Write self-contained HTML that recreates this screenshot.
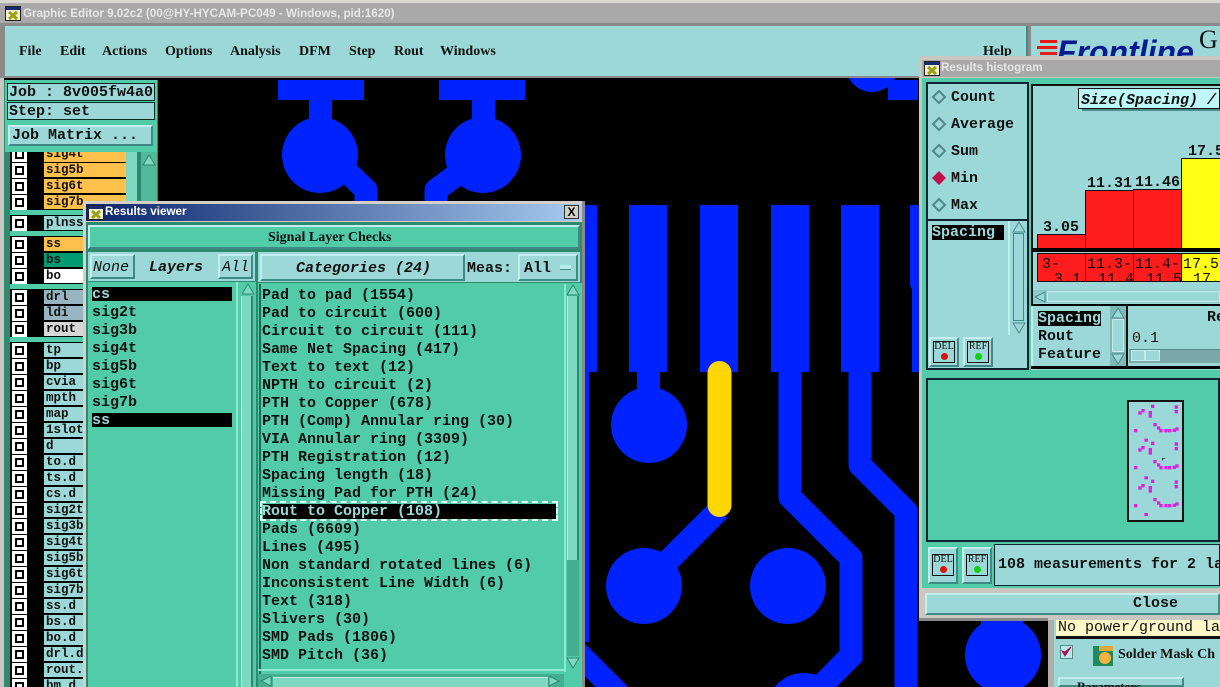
<!DOCTYPE html>
<html><head><meta charset="utf-8"><style>
html,body{margin:0;padding:0;background:#000;width:1220px;height:687px;overflow:hidden;}
#p{position:relative;width:1220px;height:687px;overflow:hidden;background:#000;}
#p div,#p svg{position:absolute;}
.t{white-space:pre;font:bold 15px/18px "Liberation Mono",monospace;color:#111;margin-top:1px;}
.s{white-space:pre;font:bold 14px/18px "Liberation Serif",serif;color:#111;}
.l{white-space:pre;font:bold 12.500px/15px "Liberation Mono",monospace;color:#111;}
.b{background:#9cd8d8;border:2px solid;border-color:#c4eeee #3f8a85 #3f8a85 #c4eeee;box-sizing:border-box;}
.g{background:#52cca8;}
.lt{background:#9cd8d8;}
.ck{left:12px;width:15px;height:15px;background:#fff;box-sizing:border-box;}
.ck i{position:absolute;left:3px;top:3px;width:9px;height:9px;border:2px solid #000;box-sizing:border-box;background:#fff;display:block;}
.tb{white-space:pre;font:bold 11.650px/16px "Liberation Sans",sans-serif;}
</style></head><body><div id="p">

<!-- PCB -->
<svg style="left:0;top:0" width="1220" height="687" viewBox="0 0 1220 687">
<g fill="#0022ff" stroke="none">
<rect x="278" y="80" width="86" height="20"/><rect x="309" y="100" width="23" height="25"/><circle cx="320" cy="155" r="38"/>
<rect x="439" y="80" width="86" height="20"/><rect x="472" y="100" width="23" height="25"/><circle cx="483" cy="155" r="38"/>
<circle cx="872" cy="66" r="26"/><rect x="888" y="80" width="30" height="20"/>
<rect x="585" y="205" width="12" height="167"/><rect x="583" y="372" width="6" height="270"/>
<rect x="629" y="205" width="38" height="167"/><rect x="700" y="205" width="38" height="167"/><rect x="771" y="205" width="38" height="167"/><rect x="841" y="205" width="38" height="167"/>
<polygon points="910,205 920,205 920,372 912,372 912,290 910,285"/>
<rect x="637" y="372" width="23" height="20"/>
<circle cx="649" cy="425" r="38"/><circle cx="644" cy="586" r="38"/><circle cx="788" cy="586" r="38"/>
<path d="M774.500 687A38 38 0 0 1 833.500 687Z"/>
<path d="M982.500 687A38 38 0 1 1 1023.500 687Z"/>
<rect x="981" y="615" width="42" height="10"/>
<polygon points="839.500,651 862.500,656 862.500,661 836.500,687 804,687"/>
<polygon points="575,633.700 628.300,687 595.700,687 575,666.300"/>
</g>
<g fill="none" stroke="#0022ff" stroke-width="23" stroke-linejoin="round">
<path d="M719 510L644 585"/>
<path d="M790 372V497L851 558V656"/>
<path d="M860 372V465L906 511V687"/>
<path d="M340 165L366 190V215"/>
<path d="M470 165L436 190V215"/>
</g>
<rect x="707.500" y="361" width="24" height="156" rx="12" fill="#ffd700"/>
</svg>

<!-- title bar -->
<div style="left:0;top:0;width:1220px;height:3px;background:#d8d8d0"></div>
<div style="left:0;top:3px;width:1220px;height:20px;background:#a9a9a9"></div>
<svg style="left:5px;top:6px" width="16" height="15"><rect x="0.500" y="0.500" width="15" height="14" fill="#f2eed8" stroke="#222"/><rect x="1" y="1" width="14" height="3" fill="#1a2a70"/><path d="M4 6L12 13M12 6L4 13" stroke="#9aa010" stroke-width="3"/></svg>
<div class="tb" style="left:23px;top:6px;color:#e6e6e6">Graphic Editor 9.02c2 (00@HY-HYCAM-PC049 - Windows, pid:1620)</div>

<!-- menu -->
<div style="left:0;top:23px;width:1220px;height:55px;background:#8a8a8a"></div>
<div style="left:5px;top:26px;width:1021px;height:50px;background:#9cd8d8;border-right:2px solid #3f8a85"></div>
<div class="s" style="left:19px;top:43px">File</div>
<div class="s" style="left:60px;top:43px">Edit</div>
<div class="s" style="left:102px;top:43px">Actions</div>
<div class="s" style="left:165px;top:43px">Options</div>
<div class="s" style="left:230px;top:43px">Analysis</div>
<div class="s" style="left:299px;top:43px">DFM</div>
<div class="s" style="left:349px;top:43px">Step</div>
<div class="s" style="left:394px;top:43px">Rout</div>
<div class="s" style="left:440px;top:43px">Windows</div>
<div class="s" style="left:983px;top:43px">Help</div>
<div style="left:1031px;top:26px;width:189px;height:50px;background:#9cd8d8"></div>
<div style="left:1040px;top:40px;width:17px;height:3px;background:#e81818"></div>
<div style="left:1037px;top:46px;width:20px;height:3px;background:#e81818"></div>
<div style="left:1040px;top:52px;width:17px;height:3px;background:#e81818"></div>
<div style="left:1057px;top:34px;white-space:pre;font:italic bold 32px/36px 'Liberation Sans',sans-serif;color:#0a1a90">Frontline</div>
<div style="left:1199px;top:25px;font:26px/30px 'Liberation Serif',serif;color:#111">G</div>

<!-- left panel -->
<div style="left:4px;top:80px;width:154px;height:607px;background:#2e8a6e"></div>
<div style="left:10px;top:152px;width:126px;height:535px;background:#52cca8"></div>
<div style="left:5px;top:80px;width:152px;height:72px;background:#52cca8"></div>
<div class="lt" style="left:7px;top:83px;width:148px;height:18px;border:1px solid #0a2a22;box-sizing:border-box"></div>
<div class="lt" style="left:7px;top:102px;width:148px;height:18px;border:1px solid #0a2a22;box-sizing:border-box"></div>
<div class="t" style="left:9px;top:83px">Job : 8v005fw4a0</div>
<div class="t" style="left:9px;top:102px">Step: set</div>
<div class="b" style="left:8px;top:125px;width:145px;height:21px"></div>
<div class="t" style="left:12px;top:126px">Job Matrix ...</div>

<!-- layer rows -->
<div style="left:10px;top:152px;width:34px;height:535px;background:#000"></div>
<div style="left:44px;top:152px;width:82px;height:535px;background:#000"></div>
<div style="left:10px;top:210px;width:116px;height:5px;background:#52cca8"></div>
<div style="left:10px;top:231px;width:116px;height:5px;background:#52cca8"></div>
<div style="left:10px;top:284px;width:116px;height:5px;background:#52cca8"></div>
<div style="left:10px;top:337px;width:116px;height:5px;background:#52cca8"></div>
<div style="left:126px;top:152px;width:11px;height:535px;background:#7fd8c0"></div>
<div style="left:141px;top:152px;width:16px;height:535px;background:#52b89a"></div>
<svg style="left:142px;top:154px" width="14" height="12"><path d="M7 1L13 11H1Z" fill="#7fd8c0" stroke="#2e8a6e"/></svg>

<div style="left:44px;top:152px;width:82px;height:10px;background:#ffc04c"></div>
<div style="left:44px;top:163px;width:82px;height:14px;background:#ffc04c"></div>
<div style="left:44px;top:179px;width:82px;height:14px;background:#ffc04c"></div>
<div style="left:44px;top:195px;width:82px;height:14px;background:#ffc04c"></div>
<div style="left:44px;top:216px;width:82px;height:14px;background:#9cd8d8"></div>
<div style="left:44px;top:237px;width:82px;height:14px;background:#ffc04c"></div>
<div style="left:44px;top:253px;width:82px;height:14px;background:#009a70"></div>
<div style="left:44px;top:269px;width:82px;height:14px;background:#fff"></div>
<div style="left:44px;top:290px;width:82px;height:14px;background:#98b4c0"></div>
<div style="left:44px;top:306px;width:82px;height:14px;background:#98b4c0"></div>
<div style="left:44px;top:322px;width:82px;height:14px;background:#d8d8d8"></div>
<div style="left:44px;top:343px;width:82px;height:344px;background:repeating-linear-gradient(#9cd8d8 0,#9cd8d8 14px,#000 14px,#000 16px)"></div>

<div class="l" style="left:46px;top:147px;clip-path:inset(5px 0 0 0)">sig4t</div>
<div class="l" style="left:46px;top:163px">sig5b</div>
<div class="l" style="left:46px;top:179px">sig6t</div>
<div class="l" style="left:46px;top:195px">sig7b</div>
<div class="l" style="left:46px;top:216px">plnss</div>
<div class="l" style="left:46px;top:237px">ss</div>
<div class="l" style="left:46px;top:253px">bs</div>
<div class="l" style="left:46px;top:269px">bo</div>
<div class="l" style="left:46px;top:290px">drl</div>
<div class="l" style="left:46px;top:306px">ldi</div>
<div class="l" style="left:46px;top:322px">rout</div>
<div class="l" style="left:46px;top:343px">tp</div>
<div class="l" style="left:46px;top:359px">bp</div>
<div class="l" style="left:46px;top:375px">cvia</div>
<div class="l" style="left:46px;top:391px">mpth</div>
<div class="l" style="left:46px;top:407px">map</div>
<div class="l" style="left:46px;top:423px">1slot</div>
<div class="l" style="left:46px;top:439px">d</div>
<div class="l" style="left:46px;top:455px">to.d</div>
<div class="l" style="left:46px;top:471px">ts.d</div>
<div class="l" style="left:46px;top:487px">cs.d</div>
<div class="l" style="left:46px;top:503px">sig2t</div>
<div class="l" style="left:46px;top:519px">sig3b</div>
<div class="l" style="left:46px;top:535px">sig4t</div>
<div class="l" style="left:46px;top:551px">sig5b</div>
<div class="l" style="left:46px;top:567px">sig6t</div>
<div class="l" style="left:46px;top:583px">sig7b</div>
<div class="l" style="left:46px;top:599px">ss.d</div>
<div class="l" style="left:46px;top:615px">bs.d</div>
<div class="l" style="left:46px;top:631px">bo.d</div>
<div class="l" style="left:46px;top:647px">drl.d</div>
<div class="l" style="left:46px;top:663px">rout.d</div>
<div class="l" style="left:46px;top:679px;height:8px;line-height:14px;overflow:hidden">bm.d</div>

<!-- checkboxes -->
<div class="ck" style="top:147px;clip-path:inset(5px 0 0 0)"><i></i></div>
<div class="ck" style="top:163px"><i></i></div>
<div class="ck" style="top:179px"><i></i></div>
<div class="ck" style="top:195px"><i></i></div>
<div class="ck" style="top:216px"><i></i></div>
<div class="ck" style="top:237px"><i></i></div>
<div class="ck" style="top:253px"><i></i></div>
<div class="ck" style="top:269px"><i></i></div>
<div class="ck" style="top:290px"><i></i></div>
<div class="ck" style="top:306px"><i></i></div>
<div class="ck" style="top:322px"><i></i></div>
<div class="ck" style="top:343px"><i></i></div>
<div class="ck" style="top:359px"><i></i></div>
<div class="ck" style="top:375px"><i></i></div>
<div class="ck" style="top:391px"><i></i></div>
<div class="ck" style="top:407px"><i></i></div>
<div class="ck" style="top:423px"><i></i></div>
<div class="ck" style="top:439px"><i></i></div>
<div class="ck" style="top:455px"><i></i></div>
<div class="ck" style="top:471px"><i></i></div>
<div class="ck" style="top:487px"><i></i></div>
<div class="ck" style="top:503px"><i></i></div>
<div class="ck" style="top:519px"><i></i></div>
<div class="ck" style="top:535px"><i></i></div>
<div class="ck" style="top:551px"><i></i></div>
<div class="ck" style="top:567px"><i></i></div>
<div class="ck" style="top:583px"><i></i></div>
<div class="ck" style="top:599px"><i></i></div>
<div class="ck" style="top:615px"><i></i></div>
<div class="ck" style="top:631px"><i></i></div>
<div class="ck" style="top:647px"><i></i></div>
<div class="ck" style="top:663px"><i></i></div>
<div class="ck" style="top:679px;height:8px;overflow:hidden"><i style="height:5px;border-bottom:0"></i></div>
<div style="left:0;top:78px;width:4px;height:609px;background:#c8c8c0"></div>

<!-- Results viewer -->
<div style="left:83px;top:201px;width:502px;height:486px;background:#d4d0c8"></div>
<div style="left:86px;top:204px;width:496px;height:17px;background:linear-gradient(90deg,#0a246a,#a6caf0)"></div>
<svg style="left:88px;top:205px" width="16" height="15"><rect x="0.500" y="0.500" width="15" height="14" fill="#f2eed8" stroke="#222"/><rect x="1" y="1" width="14" height="3" fill="#1a2a70"/><path d="M4 6L12 13M12 6L4 13" stroke="#9aa010" stroke-width="3"/></svg>
<div class="tb" style="left:105px;top:204px;color:#fff">Results viewer</div>
<div style="left:564px;top:205px;width:15px;height:14px;background:#d4d0c8;border:1px solid #333;box-sizing:border-box;font:bold 12px/12px 'Liberation Sans';text-align:center;color:#000">X</div>
<div style="left:86px;top:222px;width:496px;height:465px;background:#2e8a6e"></div>
<div class="b g" style="left:88px;top:225px;width:492px;height:24px"></div>
<div class="s" style="left:268px;top:229px">Signal Layer Checks</div>

<div class="lt" style="left:88px;top:252px;width:167px;height:29px"></div>
<div class="b" style="left:90px;top:254px;width:45px;height:25px"></div>
<div class="t" style="left:93px;top:258px;font-weight:normal;font-style:italic">None</div>
<div class="t" style="left:149px;top:258px;font-style:italic">Layers</div>
<div class="b" style="left:218px;top:254px;width:35px;height:25px"></div>
<div class="t" style="left:222px;top:258px;font-weight:normal;font-style:italic">All</div>
<div class="g" style="left:88px;top:282px;width:168px;height:405px"></div>
<div style="left:92px;top:287px;width:140px;height:14px;background:#000"></div>
<div class="t" style="left:92px;top:285px;color:#9cd8d8">cs</div>
<div class="t" style="left:92px;top:303px">sig2t</div>
<div class="t" style="left:92px;top:321px">sig3b</div>
<div class="t" style="left:92px;top:339px">sig4t</div>
<div class="t" style="left:92px;top:357px">sig5b</div>
<div class="t" style="left:92px;top:375px">sig6t</div>
<div class="t" style="left:92px;top:393px">sig7b</div>
<div style="left:92px;top:413px;width:140px;height:14px;background:#000"></div>
<div class="t" style="left:92px;top:411px;color:#9cd8d8">ss</div>
<div style="left:236px;top:282px;width:20px;height:405px;background:#52cca8;border-left:2px solid #8fe8d0;box-sizing:border-box"></div>
<div style="left:241px;top:296px;width:12px;height:391px;background:#7fd8c0;border-left:1px solid #b8f0e0;border-right:2px solid #2e8a6e;box-sizing:border-box"></div>
<svg style="left:242px;top:283px" width="13" height="12"><path d="M6 1L12 11H0Z" fill="#7fd8c0" stroke="#2e8a6e"/></svg>

<div class="lt" style="left:258px;top:252px;width:322px;height:30px"></div>
<div class="b" style="left:260px;top:254px;width:205px;height:27px"></div>
<div class="t" style="left:296px;top:259px;font-style:italic">Categories (24)</div>
<div class="t" style="left:467px;top:259px">Meas:</div>
<div class="b" style="left:518px;top:254px;width:60px;height:27px"></div>
<div class="t" style="left:524px;top:259px">All</div>
<div style="left:560px;top:265px;width:11px;height:4px;background:#b8ecec;border-bottom:1px solid #3f8a85"></div>

<div class="g" style="left:258px;top:283px;width:324px;height:404px"></div>
<div style="left:259px;top:284px;width:2px;height:403px;background:#1f6a55"></div>
<div class="t" style="left:262px;top:286px">Pad to pad (1554)</div>
<div class="t" style="left:262px;top:304px">Pad to circuit (600)</div>
<div class="t" style="left:262px;top:322px">Circuit to circuit (111)</div>
<div class="t" style="left:262px;top:340px">Same Net Spacing (417)</div>
<div class="t" style="left:262px;top:358px">Text to text (12)</div>
<div class="t" style="left:262px;top:376px">NPTH to circuit (2)</div>
<div class="t" style="left:262px;top:394px">PTH to Copper (678)</div>
<div class="t" style="left:262px;top:412px">PTH (Comp) Annular ring (30)</div>
<div class="t" style="left:262px;top:430px">VIA Annular ring (3309)</div>
<div class="t" style="left:262px;top:448px">PTH Registration (12)</div>
<div class="t" style="left:262px;top:466px">Spacing length (18)</div>
<div class="t" style="left:262px;top:484px">Missing Pad for PTH (24)</div>
<div style="left:260px;top:501px;width:298px;height:20px;box-sizing:border-box;border:2px dashed #e8f8f4"></div>
<div style="left:263px;top:504px;width:293px;height:15px;background:#000"></div>
<div class="t" style="left:262px;top:502px;color:#9cd8d8">Rout to Copper (108)</div>
<div class="t" style="left:262px;top:520px">Pads (6609)</div>
<div class="t" style="left:262px;top:538px">Lines (495)</div>
<div class="t" style="left:262px;top:556px">Non standard rotated lines (6)</div>
<div class="t" style="left:262px;top:574px">Inconsistent Line Width (6)</div>
<div class="t" style="left:262px;top:592px">Text (318)</div>
<div class="t" style="left:262px;top:610px">Slivers (30)</div>
<div class="t" style="left:262px;top:628px">SMD Pads (1806)</div>
<div class="t" style="left:262px;top:646px">SMD Pitch (36)</div>
<div style="left:564px;top:284px;width:2px;height:388px;background:#8fe8d0"></div>
<div style="left:567px;top:296px;width:12px;height:264px;background:#7fd8c0;border-left:1px solid #b8f0e0;border-right:2px solid #2e8a6e;box-sizing:border-box"></div>
<div style="left:567px;top:560px;width:12px;height:96px;background:#45b090"></div>
<svg style="left:567px;top:284px" width="13" height="12"><path d="M6 1L12 11H0Z" fill="#7fd8c0" stroke="#2e8a6e"/></svg>
<svg style="left:567px;top:657px" width="13" height="12"><path d="M6 11L12 1H0Z" fill="#7fd8c0" stroke="#2e8a6e"/></svg>
<div style="left:258px;top:669px;width:306px;height:2px;background:#8fe8d0"></div>
<div style="left:258px;top:674px;width:306px;height:13px;background:#45b090"></div>
<div style="left:273px;top:677px;width:275px;height:10px;background:#7fd8c0;border-top:1px solid #b8f0e0;box-sizing:border-box"></div>
<svg style="left:260px;top:676px" width="13" height="11"><path d="M1 5L11 0V10Z" fill="#7fd8c0" stroke="#2e8a6e"/></svg>
<svg style="left:548px;top:676px" width="13" height="11"><path d="M11 5L1 0V10Z" fill="#7fd8c0" stroke="#2e8a6e"/></svg>
<div style="left:582px;top:201px;width:3px;height:486px;background:#8a8a8a"></div>

<!-- far right panel -->
<div style="left:1048px;top:618px;width:172px;height:69px;background:#9cd8d8;border-left:6px solid #b0b0a8;box-sizing:border-box"></div>
<div style="left:1056px;top:620px;width:164px;height:16px;background:#fdf7c8"></div>
<div style="left:1056px;top:636px;width:164px;height:3px;background:#111"></div>
<div class="t" style="left:1058px;top:618px;font-weight:normal">No power/ground la</div>
<svg style="left:1060px;top:645px" width="14" height="15"><rect x="0.500" y="0.500" width="12" height="13" fill="#b8ecec" stroke="#5a8a88"/><path d="M2 6L5 11L11 2L5 7Z" fill="#b01050" stroke="#b01050"/></svg>
<svg style="left:1093px;top:646px" width="20" height="20"><rect width="20" height="20" fill="#1f8a5a"/><circle cx="12" cy="12" r="6" fill="#f8b040"/><path d="M6 0H20V5H6Z" fill="#e0a838"/></svg>
<div class="s" style="left:1118px;top:646px">Solder Mask Ch</div>
<div class="b" style="left:1058px;top:677px;width:126px;height:10px"></div>
<div class="s" style="left:1077px;top:678px;font-size:13px;height:9px;overflow:hidden">Parameters</div>

<!-- Results histogram -->
<div style="left:919px;top:56px;width:301px;height:564px;background:#c8c8c0"></div>
<div style="left:922px;top:60px;width:298px;height:17px;background:#a9a9a9"></div>
<svg style="left:924px;top:61px" width="16" height="15"><rect x="0.500" y="0.500" width="15" height="14" fill="#f2eed8" stroke="#222"/><rect x="1" y="1" width="14" height="3" fill="#1a2a70"/><path d="M4 6L12 13M12 6L4 13" stroke="#9aa010" stroke-width="3"/></svg>
<div class="tb" style="left:941px;top:60px;color:#e6e6e6">Results histogram</div>
<div style="left:922px;top:78px;width:298px;height:510px;background:#52cca8"></div>
<div class="lt" style="left:926px;top:82px;width:103px;height:288px;border:2px solid #123;box-sizing:border-box"></div>
<div style="left:926px;top:219px;width:103px;height:2px;background:#123"></div>

<svg style="left:930px;top:88px" width="20" height="130">
<g fill="#9cd8d8" stroke="#4f8a8a" stroke-width="2"><path d="M9 3L15 9L9 15L3 9Z"/><path d="M9 30L15 36L9 42L3 36Z"/><path d="M9 57L15 63L9 69L3 63Z"/><path d="M9 111L15 117L9 123L3 117Z"/></g>
<path d="M9 83L16 90L9 97L2 90Z" fill="#c0104c"/>
</svg>
<div class="t" style="left:951px;top:88px">Count</div>
<div class="t" style="left:951px;top:115px">Average</div>
<div class="t" style="left:951px;top:142px">Sum</div>
<div class="t" style="left:951px;top:169px">Min</div>
<div class="t" style="left:951px;top:196px">Max</div>

<div style="left:932px;top:225px;width:72px;height:15px;background:#000"></div>
<div class="t" style="left:932px;top:223px;color:#9cd8d8">Spacing</div>
<div style="left:1008px;top:221px;width:2px;height:114px;background:#c4eeee"></div>
<div style="left:1013px;top:233px;width:11px;height:88px;background:#9cd8d8;border:1px solid #3f8a85;box-sizing:border-box"></div>
<svg style="left:1012px;top:221px" width="14" height="12"><path d="M7 1L13 11H1Z" fill="#9cd8d8" stroke="#4f8a8a"/></svg>
<svg style="left:1012px;top:322px" width="14" height="12"><path d="M7 11L13 1H1Z" fill="#9cd8d8" stroke="#4f8a8a"/></svg>
<div class="b" style="left:929px;top:337px;width:30px;height:30px"></div>
<div class="b" style="left:963px;top:337px;width:30px;height:30px"></div>
<div style="left:933px;top:341px;width:22px;height:22px;border:1px solid #111;box-sizing:border-box;font:10px/10px 'Liberation Serif';text-align:center;color:#111">DEL</div>
<div style="left:967px;top:341px;width:22px;height:22px;border:1px solid #111;box-sizing:border-box;font:10px/10px 'Liberation Serif';text-align:center;color:#111">REF</div>
<div style="left:941px;top:353px;width:7px;height:7px;border-radius:50%;background:#e01010"></div>
<div style="left:975px;top:353px;width:7px;height:7px;border-radius:50%;background:#10d010"></div>

<!-- histogram chart -->
<div class="lt" style="left:1031px;top:84px;width:189px;height:222px;border-top:2px solid #111;border-left:2px solid #111;box-sizing:border-box"></div>
<div style="left:1082px;top:108px;width:138px;height:3px;background:#4f8a8a"></div>
<div style="left:1078px;top:88px;width:142px;height:21px;background:#bff8f8;border:1px solid #111;box-sizing:border-box"></div>
<div class="t" style="left:1081px;top:91px;font-style:italic">Size(Spacing) /</div>
<div style="left:1037px;top:234px;width:49px;height:15px;background:#ff1c1c;border:1px solid #111;box-sizing:border-box"></div>
<div style="left:1085px;top:190px;width:49px;height:59px;background:#ff1c1c;border:1px solid #111;box-sizing:border-box"></div>
<div style="left:1133px;top:189px;width:49px;height:60px;background:#ff1c1c;border:1px solid #111;box-sizing:border-box"></div>
<div style="left:1181px;top:158px;width:39px;height:91px;background:#ffff14;border:1px solid #111;box-sizing:border-box;border-right:0"></div>
<div class="t" style="left:1043px;top:218px;">3.05</div>
<div class="t" style="left:1087px;top:174px;">11.31</div>
<div class="t" style="left:1135px;top:173px;">11.46</div>
<div class="t" style="left:1188px;top:142px;">17.5</div>
<div style="left:1032px;top:248px;width:188px;height:4px;background:#000"></div>
<div style="left:1037px;top:253px;width:49px;height:29px;background:#ff1c1c;border:1px solid #111;box-sizing:border-box"></div>
<div style="left:1085px;top:253px;width:49px;height:29px;background:#ff1c1c;border:1px solid #111;box-sizing:border-box"></div>
<div style="left:1133px;top:253px;width:49px;height:29px;background:#ff1c1c;border:1px solid #111;box-sizing:border-box"></div>
<div style="left:1181px;top:253px;width:39px;height:29px;background:#ffff14;border:1px solid #111;box-sizing:border-box;border-right:0"></div>
<div style="left:1032px;top:253px;width:188px;height:29px;overflow:hidden">
<div class="t" style="left:10px;top:2px;font-weight:normal">3-</div>
<div class="t" style="left:22px;top:17px;font-weight:normal;height:11px;overflow:hidden">3.1</div>
<div class="t" style="left:55px;top:2px;font-weight:normal">11.3-</div>
<div class="t" style="left:66px;top:17px;font-weight:normal;height:11px;overflow:hidden">11.4</div>
<div class="t" style="left:103px;top:2px;font-weight:normal">11.4-</div>
<div class="t" style="left:114px;top:17px;font-weight:normal;height:11px;overflow:hidden">11.5</div>
<div class="t" style="left:151px;top:2px;font-weight:normal">17.5</div>
<div class="t" style="left:161px;top:17px;font-weight:normal;height:11px;overflow:hidden">17.</div>
</div>
<div style="left:1033px;top:290px;width:187px;height:13px;background:#8fc8c8"></div>
<div style="left:1047px;top:291px;width:173px;height:11px;background:#9cd8d8;border:1px solid #c4eeee;box-sizing:border-box"></div>
<svg style="left:1034px;top:291px" width="12" height="12"><path d="M1 6L11 1V11Z" fill="#9cd8d8" stroke="#4f8a8a"/></svg>
<div style="left:1031px;top:304px;width:189px;height:3px;background:#000"></div>
<div style="left:1031px;top:306px;width:189px;height:64px;background:#9cd8d8;border-left:2px solid #c4eeee;box-sizing:border-box"></div>
<div style="left:1031px;top:366px;width:189px;height:3px;background:#000"></div>
<div style="left:1038px;top:311px;width:63px;height:15px;background:#000"></div>
<div class="t" style="left:1038px;top:309px;color:#9cd8d8">Spacing</div>
<div class="t" style="left:1038px;top:327px">Rout</div>
<div class="t" style="left:1038px;top:345px">Feature</div>
<div style="left:1110px;top:306px;width:16px;height:60px;background:#7fb8b8"></div>
<div style="left:1112px;top:319px;width:12px;height:33px;background:#9cd8d8;border:1px solid #c4eeee;box-sizing:border-box"></div>
<svg style="left:1111px;top:307px" width="14" height="12"><path d="M7 1L13 11H1Z" fill="#9cd8d8" stroke="#4f8a8a"/></svg>
<svg style="left:1111px;top:353px" width="14" height="12"><path d="M7 11L13 1H1Z" fill="#9cd8d8" stroke="#4f8a8a"/></svg>
<div style="left:1126px;top:305px;width:2px;height:61px;background:#111"></div>
<div class="t" style="left:1207px;top:308px">Re</div>
<div class="t" style="left:1132px;top:329px;font-weight:normal">0.1</div>
<div style="left:1129px;top:349px;width:91px;height:14px;background:#7aa8a8;border-top:1px solid #4f8a8a;box-sizing:border-box"></div>
<div style="left:1131px;top:350px;width:14px;height:11px;background:#9cd8d8;border:1px solid #c4eeee;box-sizing:border-box"></div>
<div style="left:1145px;top:350px;width:15px;height:11px;background:#9cd8d8;border:1px solid #c4eeee;box-sizing:border-box"></div>

<!-- preview -->
<div style="left:926px;top:378px;width:294px;height:164px;background:#52cca8;border:2px solid #123;box-sizing:border-box"></div>
<div style="left:1127px;top:400px;width:57px;height:122px;background:#9cd8d8;border:2px solid #111;box-sizing:border-box"></div>
<svg style="left:920px;top:380px" width="300" height="307" viewBox="0 0 900 921">
<g fill="#e020e0">
<g id="d"><rect x="655" y="94" width="10" height="10"/><rect x="664" y="87" width="10" height="10"/><rect x="693" y="74" width="10" height="10"/><rect x="686" y="93" width="10" height="10"/><rect x="686" y="103" width="10" height="10"/><rect x="764" y="76" width="10" height="10"/><rect x="764" y="90" width="10" height="10"/><rect x="642" y="147" width="10" height="10"/><rect x="700" y="129" width="10" height="10"/><rect x="711" y="139" width="10" height="10"/><rect x="718" y="147" width="10" height="10"/><rect x="733" y="147" width="10" height="10"/><rect x="744" y="147" width="10" height="10"/><rect x="758" y="146" width="10" height="10"/><rect x="766" y="142" width="10" height="10"/></g>
<use href="#d" y="111"/><use href="#d" y="225"/>
<rect x="673" y="176" width="11" height="9"/><rect x="673" y="289" width="11" height="9"/><rect x="673" y="399" width="11" height="9"/>
</g>
<path d="M727 242V235H736" fill="none" stroke="#111" stroke-width="2"/>
</svg>

<div style="left:922px;top:542px;width:298px;height:46px;background:#52cca8"></div>
<div class="b" style="left:928px;top:547px;width:30px;height:37px"></div>
<div class="b" style="left:962px;top:547px;width:30px;height:37px"></div>
<div style="left:932px;top:554px;width:22px;height:22px;border:1px solid #111;box-sizing:border-box;font:10px/10px 'Liberation Serif';text-align:center;color:#111">DEL</div>
<div style="left:966px;top:554px;width:22px;height:22px;border:1px solid #111;box-sizing:border-box;font:10px/10px 'Liberation Serif';text-align:center;color:#111">REF</div>
<div style="left:940px;top:566px;width:7px;height:7px;border-radius:50%;background:#e01010"></div>
<div style="left:974px;top:566px;width:7px;height:7px;border-radius:50%;background:#10d010"></div>
<div class="lt" style="left:994px;top:544px;width:226px;height:42px;border:1px solid #123;box-sizing:border-box"></div>
<div class="t" style="left:998px;top:555px">108 measurements for 2 la</div>
<div style="left:922px;top:588px;width:298px;height:30px;background:#c8c8c0"></div>
<div class="b" style="left:925px;top:593px;width:295px;height:22px"></div>
<div class="t" style="left:1133px;top:594px">Close</div>
<div style="left:919px;top:618px;width:129px;height:3px;background:#8a8a8a"></div>

</div></body></html>
